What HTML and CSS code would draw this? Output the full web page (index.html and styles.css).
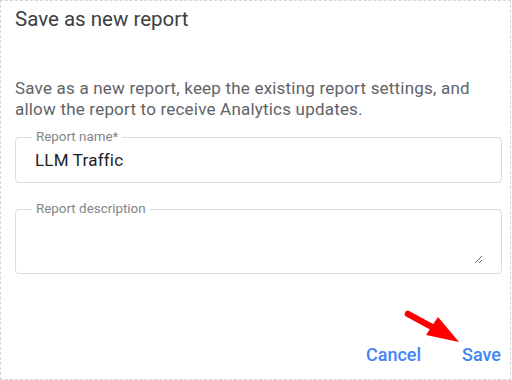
FILE: index.html
```html
<!DOCTYPE html>
<html lang="en">
<head>
<meta charset="utf-8">
<title>Save as new report</title>
<link rel="stylesheet" href="styles.css">
</head>
<body>
<div class="dialog">
  <h2 class="title">Save as new report</h2>
  <p class="desc">Save as a new report, keep the existing report settings, and allow the report to receive Analytics updates.</p>
  <fieldset class="field field-name">
    <legend class="field-label">Report name*</legend>
    <input class="field-input" type="text" value="LLM Traffic">
  </fieldset>
  <fieldset class="field field-desc">
    <legend class="field-label">Report description</legend>
    <textarea class="field-textarea"></textarea>
  </fieldset>
  <div class="spacer"></div>
  <div class="actions">
    <button class="btn">Cancel</button>
    <button class="btn">Save</button>
  </div>
  <svg class="arrow" width="70" height="45" viewBox="400 305 70 45" aria-hidden="true">
    <line x1="408" y1="314" x2="432" y2="327" stroke="#ff0000" stroke-width="6.5" stroke-linecap="round"/>
    <polygon points="438,317 426,335 459,342" fill="#ff0000"/>
  </svg>
</div>
</body>
</html>
```
FILE: styles.css
```css
html, body {
  margin: 0;
  padding: 0;
  background: #ffffff;
}
body {
  font-family: Roboto, "Noto Sans", Arial, sans-serif;
}
.dialog {
  position: relative;
  box-sizing: border-box;
  width: 511px;
  height: 380px;
  border: 1px dashed #d6d6d6;
  padding: 5px 8px 0 14px;
  display: flex;
  flex-direction: column;
}
.title {
  margin: 0;
  font-size: 20.5px;
  line-height: 26px;
  font-weight: 400;
  color: #3c4043;
}
.desc {
  margin: 46px 0 0 0;
  max-width: 472px;
  font-size: 17px;
  letter-spacing: 0.2px;
  line-height: 21px;
  color: #5f6368;
}
.field {
  margin: 0;
  border: 1px solid #dadce0;
  border-radius: 4px;
  padding: 0 16px;
  min-width: 0;
}
.field-name {
  margin-top: 9px;
  padding-top: 3px;
  padding-bottom: 10px;
}
.field-desc {
  margin-top: 18px;
  padding-right: 18px;
  padding-bottom: 9px;
}
.field-label {
  padding: 0 4px;
  font-size: 13.4px;
  line-height: 16px;
  color: #80868b;
}
.field-input {
  display: block;
  width: 100%;
  box-sizing: border-box;
  border: none;
  outline: none;
  padding: 0 0 0 3px;
  margin: 0;
  font-family: Roboto, "Noto Sans", Arial, sans-serif;
  font-size: 17px;
  letter-spacing: 0.2px;
  line-height: 24px;
  height: 24px;
  color: #202124;
  background: transparent;
}
.field-textarea {
  display: block;
  width: 100%;
  box-sizing: border-box;
  border: none;
  outline: none;
  padding: 0 0 0 3px;
  margin: 0;
  font-family: Roboto, "Noto Sans", Arial, sans-serif;
  font-size: 17px;
  line-height: 21px;
  height: 47px;
  resize: vertical;
  color: #202124;
  background: transparent;
}
.spacer {
  flex: 1;
}
.actions {
  display: flex;
  justify-content: flex-end;
  gap: 41px;
  padding-right: 1px;
  padding-bottom: 7px;
}
.btn {
  border: none;
  background: transparent;
  padding: 6px 0;
  font-family: Roboto, "Noto Sans", Arial, sans-serif;
  font-size: 18px;
  line-height: 22px;
  font-weight: 500;
  color: #4285f4;
  cursor: pointer;
}
.arrow {
  position: absolute;
  left: 399px;
  top: 304px;
}
```
